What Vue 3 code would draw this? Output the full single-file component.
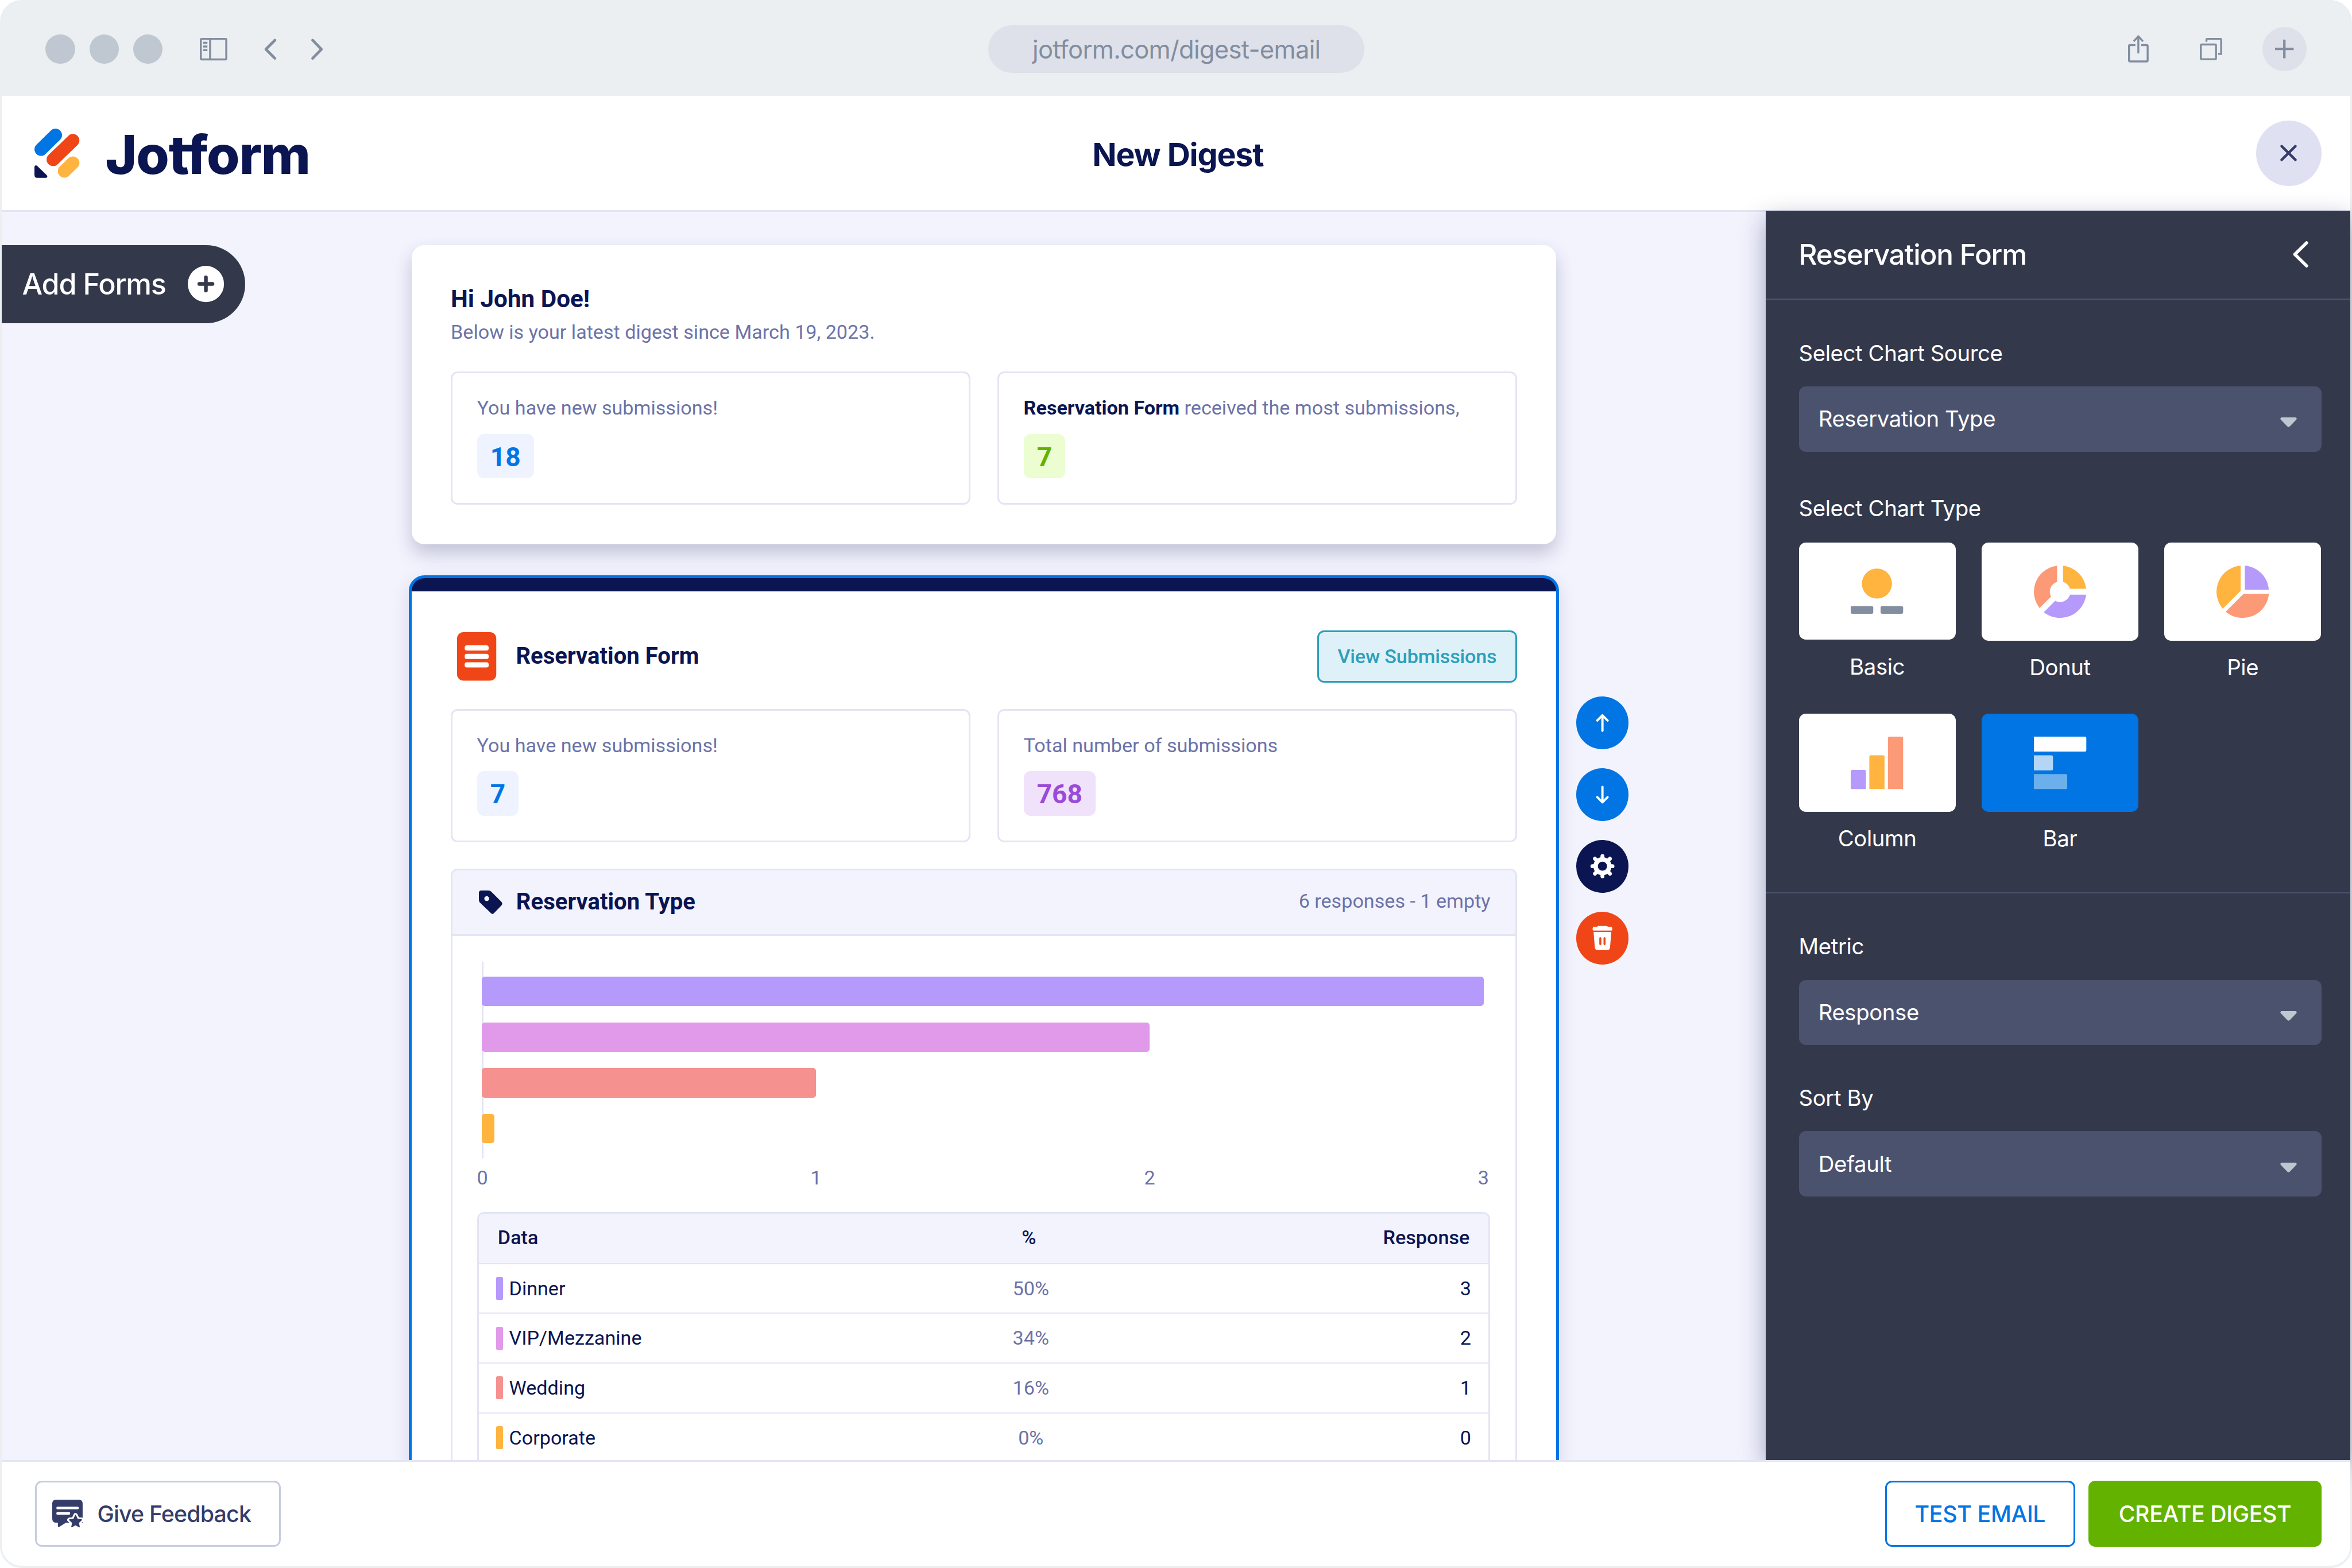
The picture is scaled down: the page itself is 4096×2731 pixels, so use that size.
<template>
  <div class="window">
    <header class="titlebar">
      <div class="lights"><i></i><i></i><i></i></div>
      <svg class="tb-sidebar" viewBox="0 0 56 46" fill="none" stroke="#828da0" stroke-width="4">
        <rect x="2" y="2" width="52" height="42" rx="2" />
        <path d="M21 2V44M7 10H15.500M7 17.500H15.500M7 25H15.500" />
      </svg>
      <svg class="tb-back" viewBox="0 0 26 44" fill="none" stroke="#828da0" stroke-width="5.500" stroke-linecap="round" stroke-linejoin="round">
        <path d="M22 3.500L3.500 22L22 40.500" />
      </svg>
      <svg class="tb-next" viewBox="0 0 26 44" fill="none" stroke="#828da0" stroke-width="5.500" stroke-linecap="round" stroke-linejoin="round">
        <path d="M4 3.500L22 22L4 40.500" />
      </svg>
      <div class="url">jotform.com/digest-email</div>
      <svg class="tb-share" viewBox="0 0 42 56" fill="none" stroke="#828da0" stroke-width="4">
        <path d="M15 20.500H4Q2 20.500 2 22.500V52Q2 54 4 54H38Q40 54 40 52V22.500Q40 20.500 38 20.500H27" />
        <path d="M21 37.500V3M11.500 13L21 2.500L30.500 13" stroke-linejoin="round" />
      </svg>
      <svg class="tb-tabs" viewBox="0 0 46 46" fill="none" stroke="#828da0" stroke-width="4">
        <rect x="2" y="13.500" width="31" height="30" rx="2" />
        <path d="M13.500 8V4Q13.500 2 15.500 2H41.500Q43.500 2 43.500 4V32.500H37.500" />
      </svg>
      <div class="tb-plus">
        <svg viewBox="0 0 38 38" stroke="#828da0" stroke-width="5"><path d="M0 19H38M19 0V38" /></svg>
      </div>
    </header>

    <div class="topbar">
      <div class="brand">
        <svg viewBox="0 0 92 101" stroke-width="26.500" stroke-linecap="round">
          <path d="M13.300 42.300L43 13.300" stroke="#0075e3" />
          <path d="M38 63.300L78.500 24.200" stroke="#f04617" />
          <path d="M61 87L78.500 70" stroke="#ffb43f" />
          <path d="M0 78Q1 73.500 5 75.500L25 95Q28 99 24 100.500H6Q0 100.500 0 94Z" fill="#0a1551" stroke="none" />
        </svg>
        <span>Jotform</span>
      </div>
      <h1>New Digest</h1>
      <button class="close">
        <svg viewBox="0 0 34 34" stroke="#343c6a" stroke-width="5.200" stroke-linecap="round"><path d="M3 3L31 31M31 3L3 31" /></svg>
      </button>
    </div>

    <main>
      <div class="left">
        <button class="add-forms">
          Add Forms
          <svg viewBox="0 0 74 74">
            <circle cx="37" cy="37" r="37" fill="#fff" />
            <path d="M23.500 37H50.500M37 23.500V50.500" stroke="#33384b" stroke-width="7.500" stroke-linecap="round" />
          </svg>
        </button>
      </div>

      <div class="column">
        <section class="card">
          <h2 class="hello">Hi John Doe!</h2>
          <p class="since">Below is your latest digest since March 19, 2023.</p>
          <div class="stats">
            <div class="stat">
              <p>You have new submissions!</p>
              <span class="chip blue">18</span>
            </div>
            <div class="stat">
              <p><b>Reservation Form</b> received the most submissions,</p>
              <span class="chip green">7</span>
            </div>
          </div>
        </section>

        <section class="form-card">
          <div class="form-head">
            <svg class="form-icon" viewBox="0 0 80 99">
              <rect width="80" height="99" rx="13" fill="#f04617" />
              <g fill="#fff">
                <rect x="15.500" y="27" width="49" height="10.500" rx="4.500" />
                <rect x="15.500" y="44.300" width="49" height="10.500" rx="4.500" />
                <rect x="15.500" y="61.600" width="49" height="10.500" rx="4.500" />
              </g>
            </svg>
            <h2>Reservation Form</h2>
            <button class="view">View Submissions</button>
          </div>
          <div class="stats">
            <div class="stat">
              <p>You have new submissions!</p>
              <span class="chip blue">7</span>
            </div>
            <div class="stat">
              <p>Total number of submissions</p>
              <span class="chip purple">768</span>
            </div>
          </div>

          <div class="report">
            <div class="report-head">
              <svg viewBox="0 0 48 48">
                <path fill="#0a1551" fill-rule="evenodd" d="M5 0H19Q23 0 25.500 2.500L45.500 22.500Q49.500 26.500 46 30.500L31 46Q28 49.500 25 46.500L2 24.500Q0 22.500 0 19V5Q0 0 5 0ZM16 11.500a5 5 0 1 0 .01 0Z" />
              </svg>
              <h3>Reservation Type</h3>
              <span>6 responses - 1 empty</span>
            </div>
            <div class="chart">
              <div class="bars">
                <div v-for="row in rows" :key="row.name" class="bar"
                     :style="{ width: (row.count / 3 * 100) + '%', background: row.color }"></div>
              </div>
              <div class="axis">
                <span v-for="n in 4" :key="n">{{ n - 1 }}</span>
              </div>
            </div>
            <div class="table">
              <div class="tr th">
                <span>Data</span><span>%</span><span>Response</span>
              </div>
              <div v-for="row in rows" :key="row.name" class="tr">
                <span class="name"><i :style="{ background: row.color }"></i>{{ row.name }}</span>
                <span class="percent">{{ row.percent }}</span>
                <span>{{ row.count }}</span>
              </div>
            </div>
          </div>
        </section>
      </div>

      <div class="tools">
        <button class="up">
          <svg viewBox="0 0 107 107" fill="none" stroke="#fff" stroke-width="4.600" stroke-linecap="round" stroke-linejoin="round"><path d="M53.500 70V39M43 49L53.500 38.500L64 49" /></svg>
        </button>
        <button class="down">
          <svg viewBox="0 0 107 107" fill="none" stroke="#fff" stroke-width="4.600" stroke-linecap="round" stroke-linejoin="round"><path d="M53.500 38V69M43 59L53.500 69.500L64 59" /></svg>
        </button>
        <button class="gear">
          <svg viewBox="-53.500 -53.500 107 107">
            <path d="M0 -20.500V20.500M-20.500 0H20.500M-15.300 -15.300L15.300 15.300M15.300 -15.300L-15.300 15.300" stroke="#fff" stroke-width="8" stroke-linecap="round" />
            <circle r="18.500" fill="#fff" />
            <circle r="9.300" fill="#0a1551" />
          </svg>
        </button>
        <button class="trash">
          <svg viewBox="0 0 107 107">
            <g fill="#fff">
              <path d="M36 31H41.500L44.500 29H62.500L65.500 31H71Q73.500 31 73.500 33.500V36.500Q73.500 38.500 71 38.500H36Q33.500 38.500 33.500 36.500V33.500Q33.500 31 36 31Z" />
              <path d="M37 41H70Q71.500 41 71.500 42.500L69 73Q68 78.500 63.500 78.500H43.500Q39 78.500 38 73L35.500 42.500Q35.500 41 37 41Z" />
            </g>
            <path d="M49.200 54V66M57.800 54V66" stroke="#f04617" stroke-width="4.200" stroke-linecap="round" />
          </svg>
        </button>
      </div>

      <aside class="panel">
        <div class="panel-head">
          <h2>Reservation Form</h2>
          <svg viewBox="0 0 32 54" fill="none" stroke="#fff" stroke-width="6.500" stroke-linecap="round" stroke-linejoin="round"><path d="M28 3.500L4 27L28 50.500" /></svg>
        </div>
        <div class="panel-part">
          <label>Select Chart Source</label>
          <div class="select">Reservation Type<svg viewBox="0 0 34 20"><path :d="caret" /></svg></div>
          <label class="type-label">Select Chart Type</label>
          <div class="types">
            <div class="type">
              <div class="tile basic-tile">
                <svg viewBox="0 0 107 107">
                  <circle cx="53.500" cy="38" r="30.700" fill="#ffb43f" />
                  <rect x="0" y="84" width="46" height="15.500" rx="3" fill="#828da0" />
                  <rect x="61" y="84" width="46" height="15.500" rx="3" fill="#828da0" />
                </svg>
              </div>
              Basic
            </div>
            <div class="type">
              <div class="tile">
                <svg viewBox="-53.500 -53.500 107 107">
                  <path d="M0 0V-53.500A53.500 53.500 0 0 1 53.500 0Z" fill="#ffb43f" />
                  <path d="M0 0H53.500A53.500 53.500 0 0 1 -37.800 37.800Z" fill="#b599fb" />
                  <path d="M0 0L-37.800 37.800A53.500 53.500 0 0 1 0 -53.500Z" fill="#fc9a77" />
                  <circle r="21" fill="#fff" />
                  <path d="M0 0V-55M0 0H55M0 0L-40 40" stroke="#fff" stroke-width="12" />
                </svg>
              </div>
              Donut
            </div>
            <div class="type">
              <div class="tile">
                <svg viewBox="-53.500 -53.500 107 107">
                  <path d="M0 0V-53.500A53.500 53.500 0 0 1 53.500 0Z" fill="#b599fb" />
                  <path d="M0 0H53.500A53.500 53.500 0 0 1 -37.800 37.800Z" fill="#fc9a77" />
                  <path d="M0 0L-37.800 37.800A53.500 53.500 0 0 1 0 -53.500Z" fill="#ffb43f" />
                  <path d="M0 0V-55M0 0H55M0 0L-40 40" stroke="#fff" stroke-width="8.600" />
                </svg>
              </div>
              Pie
            </div>
            <div class="type">
              <div class="tile">
                <svg viewBox="0 0 107 107">
                  <path d="M0 107V71Q0 68 3 68H28Q31 68 31 71V107Z" fill="#b599fb" />
                  <path d="M38 107V41Q38 38 41 38H66Q69 38 69 41V107Z" fill="#ffb43f" />
                  <path d="M76 107V3Q76 0 79 0H104Q107 0 107 3V107Z" fill="#fc9a77" />
                </svg>
              </div>
              Column
            </div>
            <div class="type">
              <div class="tile active">
                <svg viewBox="0 0 107 107">
                  <path d="M0 0H104Q107 0 107 3V27.500Q107 30.500 104 30.500H0Z" fill="#fff" />
                  <path d="M0 38H36Q39 38 39 41V66Q39 69 36 69H0Z" fill="#b3d6f6" />
                  <path d="M0 76.500H65Q68 76.500 68 79.500V104Q68 107 65 107H0Z" fill="#6bb0ec" />
                </svg>
              </div>
              Bar
            </div>
          </div>
        </div>
        <div class="panel-part second">
          <label>Metric</label>
          <div class="select">Response<svg viewBox="0 0 34 20"><path :d="caret" /></svg></div>
          <label class="sort-label">Sort By</label>
          <div class="select">Default<svg viewBox="0 0 34 20"><path :d="caret" /></svg></div>
        </div>
      </aside>
    </main>

    <footer>
      <button class="feedback">
        <svg viewBox="0 0 62 56">
          <path d="M8 0H54Q62 0 62 8V47H28L14.500 55.500Q12 57 11.500 54V47H8Q0 47 0 39V8Q0 0 8 0Z" fill="#343c6a" />
          <path d="M11 17H51.500M11 28H34" stroke="#fff" stroke-width="5.400" stroke-linecap="round" />
          <path :d="star" fill="#fff" stroke="#fff" stroke-width="9" stroke-linejoin="round" />
          <path :d="star" fill="#343c6a" stroke="#343c6a" stroke-width="2" stroke-linejoin="round" />
        </svg>
        Give Feedback
      </button>
      <div class="actions">
        <button class="test">TEST EMAIL</button>
        <button class="create">CREATE DIGEST</button>
      </div>
    </footer>
  </div>
</template>

<script setup>
const rows = [
  { name: 'Dinner', percent: '50%', count: 3, color: '#b599fb' },
  { name: 'VIP/Mezzanine', percent: '34%', count: 2, color: '#e199ea' },
  { name: 'Wedding', percent: '16%', count: 1, color: '#f5918f' },
  { name: 'Corporate', percent: '0%', count: 0, color: '#ffb43f' },
]

const caret = 'M3 0H31Q35 1 33 4.500L19.500 18.500Q17 21 14.500 18.500L1 4.500Q-1 1 3 0Z'
const star = 'M47.500 32L51.200 40L60 41L53.500 47L55.200 55.500L47.500 51.300L39.800 55.500L41.500 47L35 41L43.800 40Z'
</script>

<style>
body {
  background: #fff;
  overflow: hidden;
}
</style>

<style scoped>
* {
  box-sizing: border-box;
}
h1, h2, h3, p {
  margin: 0;
  white-space: nowrap;
}
button {
  padding: 0;
  border: 0;
  font: inherit;
  letter-spacing: inherit;
  white-space: nowrap;
}
svg {
  display: block;
  flex: none;
  overflow: visible;
}

/* drawn on a 4800 x 3200 board */
.window {
  zoom: 0.853333;
  width: 4800px;
  height: 3200px;
  padding: 0 4px 4px;
  border-radius: 44px;
  overflow: hidden;
  background: #ebeff2;
  font-family: "Inter", "Liberation Sans", sans-serif;
  display: flex;
  flex-direction: column;
}

/* browser bar */
.titlebar {
  height: 196px;
  flex: none;
  display: flex;
  align-items: center;
  padding: 4px 89px 0;
}
.lights {
  display: flex;
  gap: 29.5px;
}
.lights i {
  width: 60px;
  height: 60px;
  border-radius: 50%;
  background: #bfc7d1;
}
.tb-sidebar {
  width: 56px;
  height: 46px;
  margin-left: 76px;
}
.tb-back {
  width: 26px;
  height: 44px;
  margin-left: 75px;
}
.tb-next {
  width: 26px;
  height: 44px;
  margin-left: 69px;
}
.url {
  width: 768px;
  height: 98px;
  margin-left: 1357px;
  border-radius: 49px;
  background: #dee1e9;
  color: #828da0;
  font-size: 51px;
  letter-spacing: -0.8px;
  line-height: 100px;
  text-align: center;
}
.tb-share {
  width: 42px;
  height: 56px;
  margin-left: auto;
}
.tb-tabs {
  width: 46px;
  height: 46px;
  margin-left: 105px;
}
.tb-plus {
  width: 90px;
  height: 90px;
  margin-left: 81px;
  border-radius: 50%;
  background: #dee1e9;
  display: grid;
  place-items: center;
}
.tb-plus svg {
  width: 38px;
}

/* app header */
.topbar {
  height: 237px;
  flex: none;
  padding: 0 58px 0 66px;
  background: #fff;
  border-bottom: 4px solid #e3e5f5;
  display: grid;
  grid-template-columns: 1fr auto 1fr;
  align-items: center;
}
.brand {
  display: flex;
  align-items: center;
  color: #0a1551;
  font-size: 109px;
  font-weight: 800;
  letter-spacing: -1.3px;
  line-height: 120px;
}
.brand svg {
  width: 92px;
  height: 101px;
}
.brand span {
  margin: 6px 0 0 53px;
}
h1 {
  color: #0a1551;
  font-size: 65px;
  font-weight: 700;
  letter-spacing: -1.3px;
  line-height: 80px;
  padding-top: 6px;
}
.close {
  justify-self: end;
  width: 134px;
  height: 134px;
  border-radius: 50%;
  background: #dfe1f2;
  display: grid;
  place-items: center;
}
.close svg {
  width: 34px;
}

main {
  height: 2547px;
  flex: none;
  display: flex;
  align-items: flex-start;
  background: #f3f3fe;
}
.left {
  width: 830px;
  flex: none;
  padding-top: 67px;
}
.add-forms {
  width: 496px;
  height: 160px;
  padding: 0 43px 0 41px;
  border-radius: 0 80px 80px 0;
  background: #33384b;
  color: #fff;
  font-size: 59px;
  font-weight: 500;
  letter-spacing: -1.4px;
  display: flex;
  align-items: center;
  justify-content: space-between;
}
.add-forms svg {
  width: 74px;
}

/* digest */
.column {
  width: 2348px;
  height: 2547px;
  flex: none;
  padding-top: 67px;
  font-family: "Roboto", "Liberation Sans", sans-serif;
  font-size: 40px;
  line-height: 50px;
  color: #6c73a8;
}
.card {
  margin: 0 6px;
  padding: 80px;
  height: 611px;
  border-radius: 26px;
  background: #fff;
  box-shadow: 0 18px 36px rgba(37, 45, 91, 0.24);
}
.hello {
  color: #0a1551;
  font-size: 49.5px;
  line-height: 60px;
}
.since {
  margin-top: 13px;
}
.stats {
  margin-top: 55px;
  display: grid;
  grid-template-columns: 1fr 1fr;
  gap: 55px;
}
.stat {
  height: 272px;
  border: 4px solid #e3e5f5;
  border-radius: 14px;
  padding: 46px 0 0 50px;
}
.stat b {
  color: #0a1551;
}
.chip {
  display: inline-block;
  height: 91px;
  margin-top: 28px;
  padding: 0 27px;
  border-radius: 14px;
  font-size: 54px;
  font-weight: 700;
  line-height: 94px;
}
.chip.blue {
  background: #eef3ff;
  color: #0075e3;
}
.chip.green {
  background: #ebfdd1;
  color: #64b200;
}
.chip.purple {
  background: #f0e2fb;
  color: #9a4bd8;
}

.form-card {
  margin-top: 63px;
  height: 1920px;
  border: 6px solid #0075e3;
  border-radius: 32px;
  padding: 0 80px;
  background: linear-gradient(#0a1551 27px, #fff 27px);
  box-shadow: 0 12px 36px rgba(37, 45, 91, 0.14);
}
.form-head {
  display: flex;
  align-items: center;
  padding: 107px 0 0 13px;
}
.form-icon {
  width: 80px;
  height: 99px;
}
.form-head h2 {
  margin-left: 40px;
  color: #0a1551;
  font-size: 47px;
}
.view {
  width: 408px;
  height: 107px;
  margin-left: auto;
  padding-bottom: 2px;
  border: 4px solid #2c9fbc;
  border-radius: 14px;
  background: #dff1f8;
  color: #2c9fbc;
  font-weight: 500;
  letter-spacing: -0.2px;
}
.form-card .stats {
  margin-top: 53px;
}
.report {
  margin-top: 54px;
  height: 1240px;
  border: 4px solid #e3e5f5;
  border-radius: 14px;
}
.report-head {
  height: 134px;
  border-bottom: 4px solid #e3e5f5;
  border-radius: 10px 10px 0 0;
  background: #f3f3fe;
  padding: 0 51px 0 54px;
  display: flex;
  align-items: center;
}
.report-head svg {
  width: 48px;
}
.report-head h3 {
  margin: 0 auto 0 28px;
  color: #0a1551;
  font-size: 47px;
}
.report-head span {
  padding-bottom: 4px;
}
.chart {
  padding: 53px 0 0 60px;
}
.bars {
  width: 2045px;
  padding: 30px 0;
  display: grid;
  gap: 33.5px;
  background: linear-gradient(#e3e5f5, #e3e5f5) 0 0 / 4px 100% no-repeat;
}
.bar {
  height: 60px;
  min-width: 26px;
  border-radius: 6px;
}
.axis {
  width: 2083px;
  margin: 15px 0 0 -19px;
  display: flex;
  justify-content: space-between;
}
.axis span {
  width: 40px;
  text-align: center;
}
.table {
  margin: 45px 52px 0 50px;
  border: 4px solid #e3e5f5;
  border-bottom: 0;
  border-radius: 14px 14px 0 0;
  color: #0a1551;
}
.tr {
  height: 101.5px;
  padding: 0 35px 0 36px;
  border-bottom: 3px solid #e3e5f5;
  display: grid;
  grid-template-columns: 995px 188px 1fr;
  align-items: center;
}
.tr span:nth-child(2) {
  text-align: center;
}
.tr span:last-child {
  text-align: right;
}
.th {
  height: 103px;
  padding: 0 38px 4px 39px;
  grid-template-columns: 990px 188px 1fr;
  border-radius: 10px 10px 0 0;
  background: #f3f3fe;
  font-weight: 500;
}
.name {
  display: flex;
  align-items: center;
  gap: 12px;
}
.name i {
  width: 14px;
  height: 47px;
  border-radius: 3px;
}
.percent {
  color: #6c73a8;
  padding-left: 4px;
}

.tools {
  margin-left: 35px;
  padding-top: 989px;
  display: flex;
  flex-direction: column;
  gap: 39.5px;
}
.tools button {
  width: 107px;
  height: 107px;
  border-radius: 50%;
  background: #0075e3;
}
.tools .gear {
  background: #0a1551;
}
.tools .trash {
  background: #f04617;
}

/* settings panel */
.panel {
  position: relative;
  z-index: 1;
  width: 1192px;
  height: 2550px;
  flex: none;
  margin: -3px 0 0 auto;
  background: #33384b;
  color: #fff;
  font-size: 45px;
  letter-spacing: -0.5px;
  line-height: 60px;
  box-shadow: 0 16px 48px rgba(37, 45, 91, 0.4);
}
.panel-head {
  height: 183px;
  border-bottom: 4px solid #4b526e;
  padding: 0 85px 0 67px;
  display: flex;
  align-items: center;
  justify-content: space-between;
}
.panel-head h2 {
  font-size: 58px;
  font-weight: 500;
  letter-spacing: -1.4px;
}
.panel-head svg {
  width: 32px;
}
.panel-part {
  padding: 78px 58px 0 67px;
}
label {
  display: block;
  height: 60px;
}
.select {
  height: 133px;
  margin-top: 38px;
  padding: 0 50px 0 40px;
  border-radius: 14px;
  background: #4b526e;
  display: flex;
  align-items: center;
  justify-content: space-between;
}
.select svg {
  width: 34px;
  height: 20px;
  margin-top: 14px;
  fill: #bec6d0;
}
.type-label {
  margin-top: 86px;
}
.types {
  margin-top: 40px;
  display: grid;
  grid-template-columns: repeat(3, 320px);
  gap: 64px 53px;
}
.type {
  height: 285px;
  text-align: center;
}
.tile {
  height: 200px;
  margin-bottom: 25px;
  border-radius: 14px;
  background: #fff;
  display: grid;
  place-items: center;
}
.basic-tile {
  height: 198px;
}
.tile.active {
  background: #0075e3;
}
.tile svg {
  width: 107px;
}
.second {
  margin-top: 79px;
  padding-top: 79px;
  border-top: 3px solid #4b526e;
}
.sort-label {
  margin-top: 78px;
}

footer {
  position: relative;
  z-index: 2;
  height: 216px;
  flex: none;
  border-top: 4px solid #e3e5f5;
  border-radius: 0 0 40px 40px;
  padding: 39px 58px 0 67px;
  background: #fff;
  display: flex;
  justify-content: space-between;
  font-size: 46px;
  font-weight: 500;
}
footer button {
  height: 134px;
  border-radius: 14px;
}
.feedback {
  width: 502px;
  border: 4px solid #c8cce0;
  background: #fff;
  color: #343c6a;
  letter-spacing: -0.95px;
  padding-left: 32px;
  display: flex;
  align-items: center;
  gap: 30px;
}
.feedback svg {
  width: 62px;
}
.actions {
  display: flex;
  gap: 27px;
  letter-spacing: -0.4px;
}
.test {
  width: 388px;
  border: 4px solid #0075e3;
  background: #fff;
  color: #0075e3;
}
.create {
  width: 476px;
  background: #64b200;
  color: #fff;
}
</style>
